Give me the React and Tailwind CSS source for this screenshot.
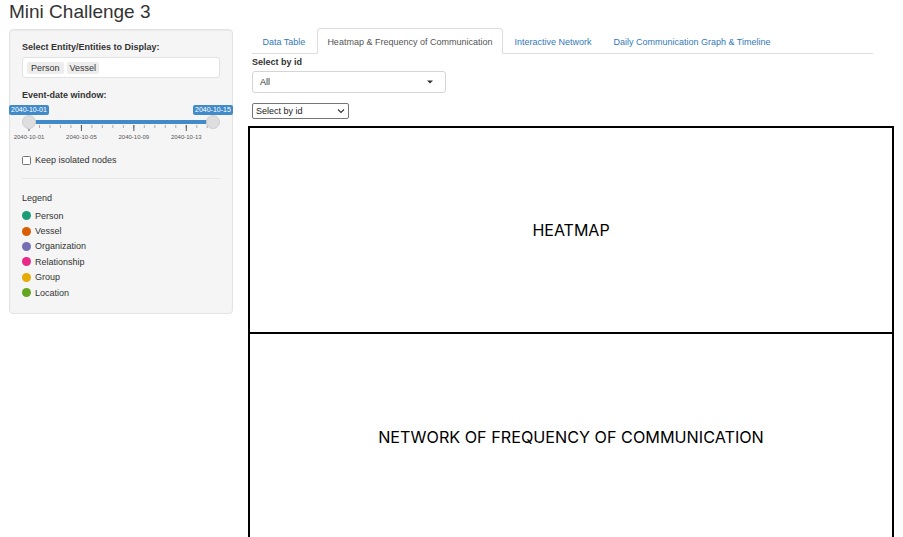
import React from "react";

const legend = [
  ["Person", "#1b9e77"],
  ["Vessel", "#d95f02"],
  ["Organization", "#7570b3"],
  ["Relationship", "#e7298a"],
  ["Group", "#e6ab02"],
  ["Location", "#66a61e"],
];

function Slider() {
  // positions relative to sidebar inner-left (page x = 10)
  const x0 = 19;
  const x1 = 202.5;
  const step = (x1 - x0) / 14;
  const majors = [0, 4, 8, 12];
  const labels = ["2040-10-01", "2040-10-05", "2040-10-09", "2040-10-13"];
  const minors = [];
  for (let d = 0; d <= 14; d += 0.8) minors.push(d);
  return (
    <div className="relative -mx-[12px] h-[45px] w-[222px]">
      <div className="absolute left-[-1px] top-[4px] h-[10px] whitespace-nowrap rounded-[2px] bg-[#428bca] px-[2px] text-[7px] leading-[10px] text-white">
        2040-10-01
      </div>
      <div className="absolute left-[183px] top-[4px] h-[10px] whitespace-nowrap rounded-[2px] bg-[#428bca] px-[2px] text-[7px] leading-[10px] text-white">
        2040-10-15
      </div>
      <svg className="absolute left-0 top-[23px]" width="222" height="8">
        {minors.map((d, i) => (
          <line key={i} x1={x0 + d * step} x2={x0 + d * step} y1="1" y2="4" stroke="#999" strokeWidth="0.8" />
        ))}
        {majors.map((d) => (
          <line key={d} x1={x0 + d * step} x2={x0 + d * step} y1="1" y2="7" stroke="#444" strokeWidth="0.9" />
        ))}
      </svg>
      <div className="absolute left-[19px] top-[19px] h-[4px] w-[183.5px] bg-[#428bca]" />
      <div className="absolute left-[12px] top-[14px] h-[14px] w-[14px] rounded-full border border-[#cfcfcf] bg-[#dedede]" />
      <div className="absolute left-[195.5px] top-[14px] h-[14px] w-[14px] rounded-full border border-[#cfcfcf] bg-[#dedede]" />
      {majors.map((d, i) => (
        <div
          key={d}
          className="absolute top-[33px] w-[40px] -translate-x-1/2 whitespace-nowrap text-center text-[6px] leading-[7px] text-[#555]"
          style={{ left: x0 + d * step }}
        >
          {labels[i]}
        </div>
      ))}
    </div>
  );
}

export default function App() {
  return (
    <div className="h-[537px] w-[903px] overflow-hidden bg-white font-['Liberation_Sans',Arial,sans-serif] text-[#333]">
      <div className="h-[28px] pl-[9px] pt-[1px] text-[19px] leading-[22px]">Mini Challenge 3</div>
      <div className="flex items-start">
        {/* Sidebar */}
        <div className="ml-[9px] mt-[1px] box-border h-[285px] w-[224px] rounded-[4px] border border-[#e3e3e3] bg-[#f5f5f5] px-[12px] pt-[11px] shadow-[inset_0_1px_1px_rgba(0,0,0,0.05)]">
          <div className="text-[9px] font-bold leading-[12px]">Select Entity/Entities to Display:</div>
          <div className="mt-[4px] flex h-[21px] items-center gap-[3px] rounded-[3px] border border-[#e2e2e2] bg-white px-[4px]">
            <span className="rounded-[2px] bg-[#ededed] px-[4px] text-[9px] leading-[12px]">Person</span>
            <span className="rounded-[2px] bg-[#ededed] px-[3px] text-[9px] leading-[12px]">Vessel</span>
          </div>
          <div className="mt-[11px] text-[9px] font-bold leading-[12px]">Event-date window:</div>
          <Slider />
          <div className="mt-[8px] flex h-[12px] items-center">
            <div className="h-[9px] w-[9px] rounded-[1.5px] border border-[#767676] bg-white" />
            <span className="ml-[4px] text-[9px] leading-[12px]">Keep isolated nodes</span>
          </div>
          <div className="mt-[12px] h-px bg-[#e6e6e6]" />
          <div className="mt-[13px] text-[9px] leading-[12px]">Legend</div>
          <div className="mt-[4px]">
            {legend.map(([name, color]) => (
              <div key={name} className="flex h-[15.4px] items-center">
                <span className="h-[9px] w-[9px] rounded-full" style={{ backgroundColor: color }} />
                <span className="ml-[4px] text-[9px] leading-[12px]">{name}</span>
              </div>
            ))}
          </div>
        </div>

        {/* Main */}
        <div className="ml-[15px] w-[646px]">
          <div className="ml-[4px] flex h-[26px] w-[621px] items-end border-b border-[#ddd]">
            <div className="-mb-px mr-[1px] h-[26px] border border-transparent px-[9.5px] pt-[7px] text-[9px] leading-[12px] text-[#337ab7]">
              Data Table
            </div>
            <div className="-mb-px mr-[1px] h-[26px] rounded-t-[4px] border border-[#ddd] border-b-white bg-white px-[9.5px] pt-[7px] text-[9px] leading-[12px] text-[#555]">
              Heatmap &amp; Frequency of Communication
            </div>
            <div className="-mb-px mr-[1px] h-[26px] border border-transparent px-[9.5px] pt-[7px] text-[9px] leading-[12px] text-[#337ab7]">
              Interactive Network
            </div>
            <div className="-mb-px h-[26px] border border-transparent px-[9.5px] pt-[7px] text-[9px] leading-[12px] text-[#337ab7]">
              Daily Communication Graph &amp; Timeline
            </div>
          </div>
          <div className="ml-[4px] mt-[1.5px] text-[9px] font-bold leading-[12px]">Select by id</div>
          <div className="ml-[4px] mt-[3.5px] flex h-[21.5px] w-[194px] items-center justify-between rounded-[3px] border border-[#d5d5d5] bg-white pl-[7px] pr-[12px]">
            <span className="text-[9px] leading-[12px]">All</span>
            <svg width="6" height="4" viewBox="0 0 6 4">
              <path d="M0 0.5 L6 0.5 L3 3.5 Z" fill="#333" />
            </svg>
          </div>
          <div className="ml-[4px] mt-[10px] flex h-[16px] w-[97px] items-center justify-between rounded-[2px] border border-[#767676] bg-white pl-[3px] pr-[3px]">
            <span className="text-[9px] leading-[12px] text-[#222]">Select by id</span>
            <svg width="8" height="6" viewBox="0 0 8 6">
              <path d="M1 1.5 L4 4.5 L7 1.5" fill="none" stroke="#333" strokeWidth="1.1" />
            </svg>
          </div>
          <div className="mt-[7.5px] flex h-[208px] w-[646px] items-center justify-center border-2 border-black font-['Inter',sans-serif] text-[16px] text-black">
            HEATMAP
          </div>
          <div className="flex h-[208px] w-[646px] items-center justify-center border-2 border-t-0 border-black font-['Inter',sans-serif] text-[16.2px] text-black">
            NETWORK OF FREQUENCY OF COMMUNICATION
          </div>
        </div>
      </div>
    </div>
  );
}
